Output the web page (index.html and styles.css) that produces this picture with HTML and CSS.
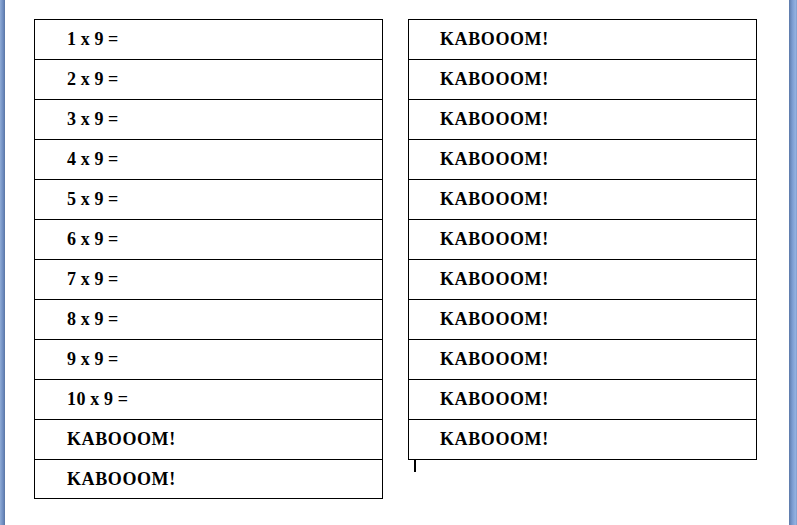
FILE: index.html
```html
<!DOCTYPE html>
<html>
<head>
<meta charset="utf-8">
<link rel="stylesheet" href="styles.css">
</head>
<body>
<div class="frame">
  <div class="strip strip-left"></div>
  <div class="page">
    <div class="col">
      <div class="grid">
        <div class="row">1 x 9 =</div>
        <div class="row">2 x 9 =</div>
        <div class="row">3 x 9 =</div>
        <div class="row">4 x 9 =</div>
        <div class="row">5 x 9 =</div>
        <div class="row">6 x 9 =</div>
        <div class="row">7 x 9 =</div>
        <div class="row">8 x 9 =</div>
        <div class="row">9 x 9 =</div>
        <div class="row">10 x 9 =</div>
        <div class="row">KABOOOM!</div>
        <div class="row row-last">KABOOOM!</div>
      </div>
    </div>
    <div class="col col-right">
      <div class="grid">
        <div class="row">KABOOOM!</div>
        <div class="row">KABOOOM!</div>
        <div class="row">KABOOOM!</div>
        <div class="row">KABOOOM!</div>
        <div class="row">KABOOOM!</div>
        <div class="row">KABOOOM!</div>
        <div class="row">KABOOOM!</div>
        <div class="row">KABOOOM!</div>
        <div class="row">KABOOOM!</div>
        <div class="row">KABOOOM!</div>
        <div class="row">KABOOOM!</div>
      </div>
      <div class="caret"></div>
    </div>
  </div>
  <div class="strip strip-right"></div>
</div>
</body>
</html>
```
FILE: styles.css
```css
html, body {
  margin: 0;
  padding: 0;
  background: #ffffff;
}
.frame {
  display: flex;
  width: 797px;
  height: 525px;
  overflow: hidden;
}
.strip {
  flex: none;
  height: 525px;
}
.strip-left {
  width: 5px;
  background: linear-gradient(to right, #8eaad6, #6d8cc0 60%, #5a75a3);
}
.strip-right {
  width: 8px;
  background: linear-gradient(to right, #5c79a8, #7a9bd0 40%, #93b1e0 80%, #7f9dcc);
}
.page {
  flex: 1;
  display: flex;
  align-items: flex-start;
  gap: 25px;
  padding: 19px 0 0 29px;
}
.col {
  display: flex;
  flex-direction: column;
  width: 349px;
}
.grid {
  border: 1px solid #000;
  display: flex;
  flex-direction: column;
}
.row {
  height: 39px;
  box-sizing: border-box;
  border-top: 1px solid #000;
  padding: 1px 0 2px 32px;
  font-family: "Liberation Serif", "Times New Roman", serif;
  font-weight: bold;
  font-size: 18px;
  line-height: 36px;
  letter-spacing: 0.6px;
  word-spacing: -1px;
  color: #000;
}
.col-right .row {
  padding-left: 31px;
}
.row:first-child {
  border-top: none;
  height: 39px;
}
.row + .row {
  height: 40px;
}
.row-last.row {
  height: 39px;
}
.caret {
  width: 2px;
  height: 12px;
  margin: 0 0 0 6px;
  background: #000;
}
```
